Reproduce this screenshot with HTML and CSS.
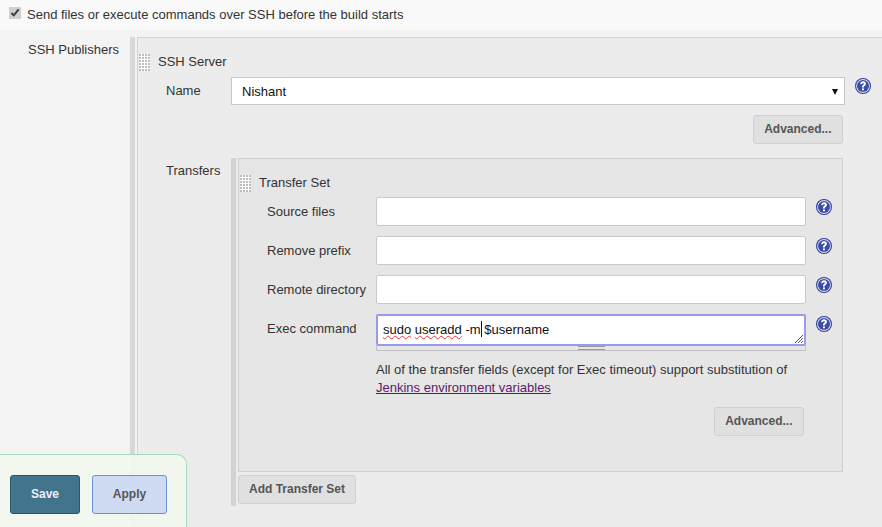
FILE: index.html
```html
<!DOCTYPE html>
<html lang="en">
<head>
<meta charset="utf-8">
<title>SSH Publishers</title>
<link rel="stylesheet" href="styles.css">
</head>
<body>
<svg class="defs" width="0" height="0" aria-hidden="true">
  <symbol id="help" viewBox="0 0 16 16">
    <circle cx="8" cy="8" r="8" fill="#2f3f97"/>
    <circle cx="8" cy="8" r="6.9" fill="#dfe3f5"/>
    <circle cx="8" cy="8" r="6" fill="#3b4da6"/>
    <path d="M5.2 6.2C5.2 4.4 6.4 3.3 8.1 3.3c1.7 0 2.8 1 2.8 2.4 0 1.1-.6 1.7-1.3 2.2-.6.4-.8.7-.8 1.3v.3H7v-.5c0-1 .4-1.5 1-2 .5-.4.8-.7.8-1.2 0-.6-.3-.9-.8-.9-.6 0-.9.4-.9 1.2z" fill="#fff"/>
    <rect x="7" y="10.4" width="1.9" height="1.9" fill="#fff"/>
  </symbol>
</svg>
<div class="top-row">
  <input class="check" type="checkbox" checked>
  <span>Send files or execute commands over SSH before the build starts</span>
</div>
<div class="main-row">
  <div class="side-label">SSH Publishers</div>
  <div class="bar-wrap">
    <div class="outer">
      <div class="head">
        <span class="handle"></span>
        <span>SSH Server</span>
      </div>
      <div class="name-row">
        <span class="name-label">Name</span>
        <div class="select"><span>Nishant</span><span class="caret"></span></div>
        <svg class="help"><use href="#help"/></svg>
      </div>
      <div class="adv-row"><button class="btn">Advanced...</button></div>
      <div class="transfers">
        <span class="name-label">Transfers</span>
        <div class="t-wrap">
          <div class="tset">
            <div class="head">
              <span class="handle"></span>
              <span>Transfer Set</span>
            </div>
            <div class="field"><span class="flabel">Source files</span><div class="input"></div><svg class="help"><use href="#help"/></svg></div>
            <div class="field"><span class="flabel">Remove prefix</span><div class="input"></div><svg class="help"><use href="#help"/></svg></div>
            <div class="field"><span class="flabel">Remote directory</span><div class="input"></div><svg class="help"><use href="#help"/></svg></div>
            <div class="field exec">
              <span class="flabel">Exec command</span>
              <div class="ta-wrap">
                <div class="textarea">
                  <span class="typed"><span class="spell">sudo</span> <span class="spell">useradd</span> -m<span class="cursor"></span> $username</span>
                  <svg class="resize" width="10" height="10" viewBox="0 0 10 10"><path d="M9 1 1 9M9 4 4 9M9 7 7 9" stroke="#555" stroke-width="1" fill="none"/></svg>
                </div>
                <div class="grip"><span class="grip-mark"></span></div>
              </div>
              <svg class="help"><use href="#help"/></svg>
            </div>
            <p class="note">All of the transfer fields (except for Exec timeout) support substitution of<br><a href="#">Jenkins environment variables</a></p>
            <div class="adv-inner"><button class="btn">Advanced...</button></div>
          </div>
          <button class="btn add">Add Transfer Set</button>
        </div>
      </div>
    </div>
  </div>
</div>
<div class="savebar">
  <button class="save">Save</button>
  <button class="apply">Apply</button>
</div>
</body>
</html>
```

FILE: styles.css
```css
* { box-sizing: border-box; }
html, body { height: 100%; }
body {
  margin: 0;
  height: 527px;
  overflow: hidden;
  background: #f3f3f3;
  color: #333;
  font: 13px/18px "Liberation Sans", Arial, sans-serif;
  position: relative;
}
.defs { position: absolute; }
.top-row {
  height: 30px;
  background: #f9f9f9;
  display: flex;
  align-items: center;
  padding: 0 0 0 9px;
  gap: 6px;
}
.check { width: 12px; height: 12px; margin: 0 0 4px 0; accent-color: #d0d0d0; }
.main-row { display: flex; height: 497px; padding-top: 7px; }
.side-label { width: 130px; padding: 4px 0 0 28px; flex: none; }
.bar-wrap {
  flex: 1;
  min-width: 0;
  border-left: 5px solid #d8d8d8;
  padding-left: 2px;
}
.outer {
  height: 490px;
  background: #ececec;
  border-top: 1px solid #d3d3d3;
  border-left: 1px solid #d3d3d3;
  padding: 15px 0 0 0;
}
.head { display: flex; align-items: center; gap: 8px; height: 18px; }
.handle {
  width: 11px;
  height: 17px;
  flex: none;
  background-color: #bdbdbd;
  background-image: linear-gradient(90deg, transparent 2px, #fff 2px), linear-gradient(transparent 2px, #fff 2px);
  background-size: 3px 3px;
  margin-left: 1px;
}
.name-row { display: flex; align-items: center; height: 28px; margin-top: 6px; }
.name-label { width: 65px; margin-left: 28px; flex: none; }
.select {
  width: 614px;
  height: 28px;
  background: #fff;
  border: 1px solid #c9c9c9;
  display: flex;
  align-items: center;
  justify-content: space-between;
  padding: 1px 6px 0 10px;
  color: #111;
}
.caret {
  width: 0;
  height: 0;
  border: 3px solid transparent;
  border-top: 6px solid #111;
  border-bottom: 0;
}
.help { width: 16px; height: 16px; margin-left: 10px; flex: none; }
.name-row .help { position: relative; top: -5px; }
.btn {
  font: bold 12px/18px "Liberation Sans", Arial, sans-serif;
  color: #555;
  background: #e0e0e0;
  border: 1px solid #d0d0d0;
  border-radius: 3px;
  height: 29px;
  padding: 0 10.5px 2px;
}
.adv-row { display: flex; justify-content: flex-end; width: 705px; margin-top: 10px; }
.transfers { display: flex; margin-top: 14px; }
.transfers > .name-label { padding-top: 4px; }
.t-wrap {
  border-left: 5px solid #d3d3d3;
  padding-left: 2px;
  width: 612px;
  height: 348px;
}
.tset {
  width: 605px;
  height: 314px;
  background: #e6e6e6;
  border: 1px solid #cfcfcf;
  padding-top: 15px;
}
.field { display: flex; height: 29px; }
.head + .field { margin-top: 5px; }
.field + .field { margin-top: 10px; }
.flabel { width: 109px; padding: 6px 0 0 0; margin-left: 28px; flex: none; white-space: nowrap; }
.input {
  width: 430px;
  height: 29px;
  background: #fff;
  border: 1px solid #c9c9c9;
  border-radius: 2px;
}
.field .help { margin: 2px 0 0 10px; }
.exec { height: 37px; }
.ta-wrap { width: 430px; }
.textarea {
  height: 32px;
  background: #fff;
  border: 2px solid #9a9aea;
  border-radius: 2px;
  padding: 5px 5px;
  color: #111;
  position: relative;
  line-height: 18px;
}
.typed { white-space: nowrap; }
.spell { text-decoration: underline wavy #e33 1px; text-underline-offset: 1px; }
.cursor {
  display: inline-block;
  width: 1px;
  height: 16px;
  background: #111;
  vertical-align: -3px;
  margin-right: -1px;
}
.resize { position: absolute; right: 0; bottom: 0; }
.grip {
  height: 5px;
  background: #e6e6e6;
  border: 1px solid #c0c0c0;
  border-top: 0;
  text-align: center;
  line-height: 0;
}
.grip-mark {
  display: inline-block;
  width: 27px;
  height: 4px;
  border-top: 1px solid #999;
  border-bottom: 1px solid #999;
}
.note { margin: 10px 0 0 137px; line-height: 18px; }
.note a { color: #5c1a6b; }
.adv-inner { display: flex; justify-content: flex-end; width: 565px; margin-top: 10px; }
.add { margin-top: 3px; padding: 0 10px 2px; }
.savebar {
  position: absolute;
  left: 0;
  bottom: 0;
  width: 187px;
  height: 73px;
  background: rgba(241, 247, 238, .88);
  border-top: 1px solid #a5d8bd;
  border-right: 1px solid #a5d8bd;
  border-top-right-radius: 10px;
  padding: 20px 0 0 10px;
  display: flex;
  align-items: flex-start;
  gap: 12px;
}
.save, .apply {
  font: bold 12px/18px "Liberation Sans", Arial, sans-serif;
  height: 39px;
  padding-bottom: 3px;
  border-radius: 3px;
}
.save { width: 70px; background: #42748c; color: #eef; border: 1px solid #2c5568; }
.apply { width: 75px; background: #cfdbf3; color: #555; border: 1px solid #6f8fd4; }
```
